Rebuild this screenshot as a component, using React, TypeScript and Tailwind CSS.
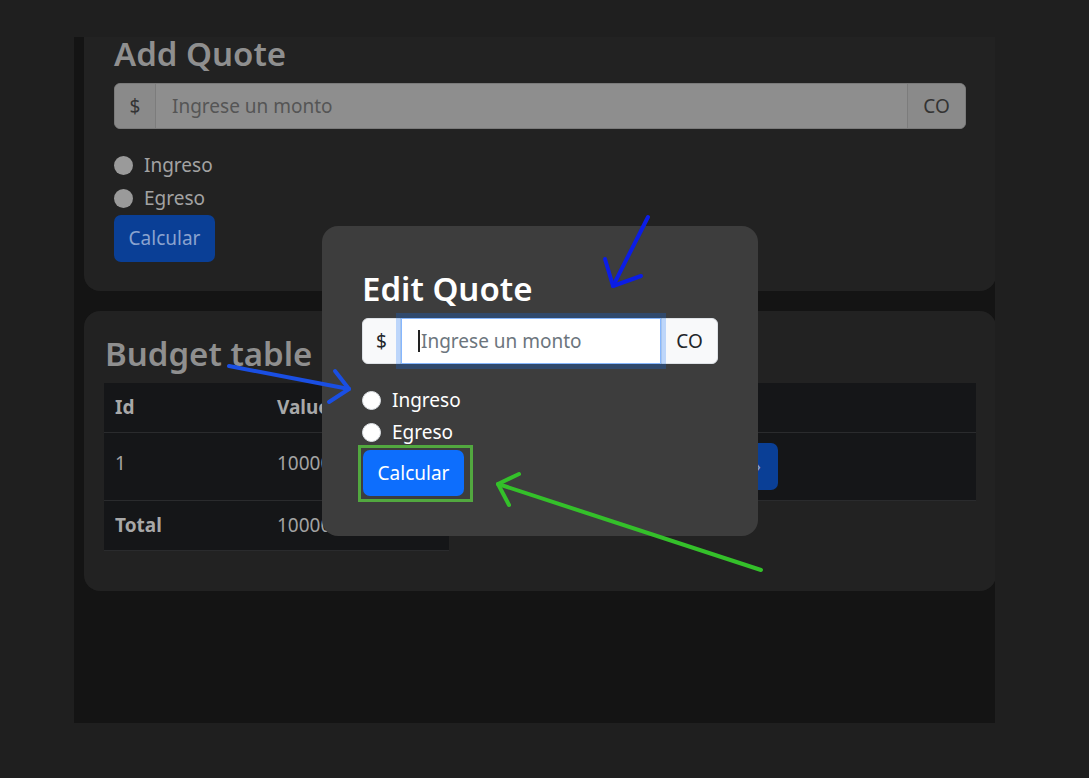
const font = { fontFamily: '"Noto Sans", "Open Sans", Arial, sans-serif' };

function Annotations() {
  return (
    <svg className="absolute inset-0 pointer-events-none" width="1089" height="778" viewBox="0 0 1089 778" fill="none">
      {/* top arrow pointing at the focused input */}
      <g stroke="#0b1de6" strokeWidth="4" strokeLinecap="round" strokeLinejoin="round">
        <path d="M648 217 L613 286" />
        <path d="M605 259 L613 286 L641 276" />
      </g>
      {/* side arrow pointing at the radios */}
      <g stroke="#1a4fe3" strokeWidth="4" strokeLinecap="round" strokeLinejoin="round">
        <path d="M229 366 L349 389" />
        <path d="M335 371 L349 389 L329 402" />
      </g>
      {/* box + arrow around the button */}
      <rect x="359.5" y="446.5" width="112" height="54" stroke="#52a83f" strokeWidth="3" />
      <g stroke="#34c02a" strokeWidth="4" strokeLinecap="round" strokeLinejoin="round">
        <path d="M761 570 L498 484" />
        <path d="M519 474 L498 484 L509 505" />
      </g>
    </svg>
  );
}

function DimRadio({ label }: { label: string }) {
  return (
    <div className="h-[33px] flex items-center gap-[11px]">
      <span className="w-[19px] h-[19px] rounded-full bg-[#9a9a9a]" />
      <span className="text-[19px] text-[#a3a3a3]">{label}</span>
    </div>
  );
}

function ModalRadio({ label }: { label: string }) {
  return (
    <div className="h-[32px] flex items-center gap-[11px]">
      <span className="w-[19px] h-[19px] rounded-full bg-white border border-[#dee2e6]" />
      <span className="text-[19px] text-white">{label}</span>
    </div>
  );
}

export default function App() {
  return (
    <div className="relative w-[1089px] h-[778px] bg-[#1f1f1f] overflow-hidden" style={font}>
      <div className="ml-[74px] mt-[37px] w-[921px] h-[686px] bg-[#141414] overflow-hidden">
        {/* Add Quote card (scrolled, top cut off) */}
        <div className="ml-[10px] w-[912px] -mt-[26px] bg-[#222222] rounded-[16px] px-[30px] pt-[26px] pb-[29px]">
          <h2 className="text-[33px] leading-[33px] font-semibold text-[#8f8f8f] mb-[13px]">Add Quote</h2>
          <div className="flex h-[46px] rounded-[6px] overflow-hidden border border-[#7a7a7a] bg-[#8e8e8e]">
            <div className="w-[41px] flex items-center justify-center bg-[#8a8a8a] border-r border-[#7c7c7c] text-[19px] text-[#333333]">$</div>
            <div className="flex-1 flex items-center pl-[16px] text-[19px] text-[#555555]">Ingrese un monto</div>
            <div className="w-[58px] flex items-center justify-center bg-[#8a8a8a] border-l border-[#7c7c7c] text-[19px] text-[#333333]">CO</div>
          </div>
          <div className="mt-[20px]">
            <DimRadio label="Ingreso" />
            <DimRadio label="Egreso" />
          </div>
          <button className="h-[47px] w-[101px] rounded-[7px] bg-[#0a3f96] text-[19px] text-[#8aa3cf]">Calcular</button>
        </div>

        {/* Budget table card */}
        <div className="ml-[10px] w-[912px] mt-[20px] bg-[#222222] rounded-[16px] px-[20px] pt-[20px] pb-[40px]">
          <h2 className="text-[33px] leading-[46px] font-semibold text-[#8f8f8f] ml-[1px] mb-[6px]">Budget table</h2>
          <div className="text-[19px] text-[#a3a3a3]">
            <div className="flex h-[50px] bg-[#151618] border-b border-[#2a2b2d]">
              <div className="w-[162px] pl-[11px] flex items-center font-bold text-[#a8a8a8]">Id</div>
              <div className="w-[183px] pl-[11px] flex items-center font-bold text-[#a8a8a8]">Value</div>
              <div className="flex-1 pl-[11px] flex items-center font-bold text-[#a8a8a8]">Actions</div>
            </div>
            <div className="flex h-[68px] bg-[#151618] border-b border-[#2a2b2d]">
              <div className="w-[162px] pl-[11px] pt-[16px]">1</div>
              <div className="w-[183px] pl-[11px] pt-[16px]">10000</div>
              <div className="flex-1 pl-[11px] flex items-center gap-[8px]">
                <button className="h-[47px] w-[110px] rounded-[7px] bg-[#6a1c22] text-[#a08080]">Eliminar</button>
                <button className="ml-[120px] h-[47px] w-[80px] rounded-[7px] bg-[#0a3f96] text-[#8aa3cf] text-right pr-[17px]">›</button>
              </div>
            </div>
            <div className="flex h-[50px] w-[345px] bg-[#151618] border-b border-[#2a2b2d]">
              <div className="w-[162px] pl-[11px] flex items-center font-bold text-[#a8a8a8]">Total</div>
              <div className="w-[183px] pl-[11px] flex items-center">10000</div>
            </div>
          </div>
        </div>
      </div>

      {/* Edit Quote modal */}
      <div className="absolute left-[322px] top-[226px] w-[436px] h-[310px] bg-[#3d3d3d] rounded-[16px] px-[40px] pt-[40px]">
        <h2 className="text-[33px] leading-[46px] font-semibold text-white mb-[6px]">Edit Quote</h2>
        <div className="flex h-[46px]">
          <div className="w-[39px] flex items-center justify-center bg-[#f8f9fa] border border-[#dee2e6] rounded-l-[6px] text-[19px] text-[#212529]">$</div>
          <div className="flex-1 flex items-center pl-[16px] bg-white border border-[#86b7fe] text-[19px] text-[#6c757d] shadow-[0_0_0_5px_rgba(13,110,253,0.25)] relative z-10">
            <span className="w-[2px] h-[22px] bg-[#222222] mr-[1px]" />
            Ingrese un monto
          </div>
          <div className="w-[57px] flex items-center justify-center bg-[#f8f9fa] border border-[#dee2e6] rounded-r-[6px] text-[19px] text-[#212529]">CO</div>
        </div>
        <div className="mt-[20px]">
          <ModalRadio label="Ingreso" />
          <ModalRadio label="Egreso" />
        </div>
        <button className="mt-[2px] ml-[1px] h-[46px] w-[101px] rounded-[7px] bg-[#0d6efd] text-[19px] text-white">Calcular</button>
      </div>

      <Annotations />
    </div>
  );
}
